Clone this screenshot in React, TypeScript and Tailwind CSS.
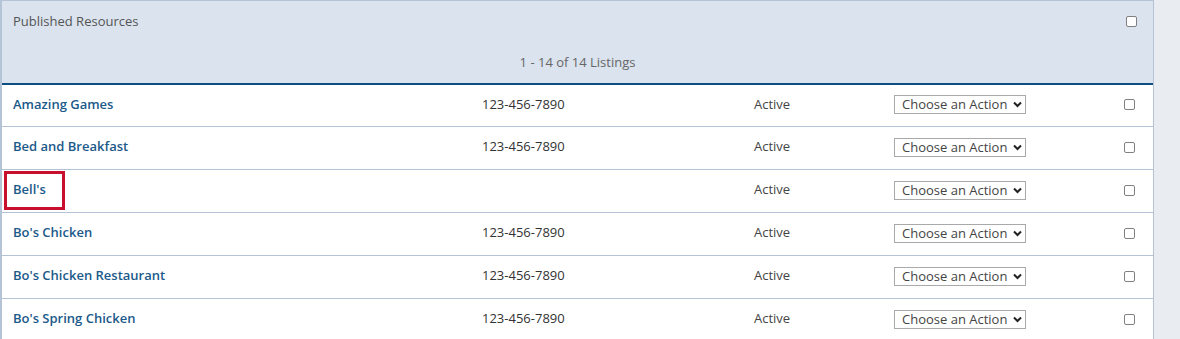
import React from 'react';

const rows = [
  { name: 'Amazing Games', phone: '123-456-7890', status: 'Active' },
  { name: 'Bed and Breakfast', phone: '123-456-7890', status: 'Active' },
  { name: "Bell's", phone: '', status: 'Active', flagged: true },
  { name: "Bo's Chicken", phone: '123-456-7890', status: 'Active' },
  { name: "Bo's Chicken Restaurant", phone: '123-456-7890', status: 'Active' },
  { name: "Bo's Spring Chicken", phone: '123-456-7890', status: 'Active' },
];

const Checkbox = () => (
  <input
    type="checkbox"
    className="appearance-none w-[11px] h-[11px] border border-[#808080] rounded-[2px] bg-white"
  />
);

const ActionSelect = () => (
  <div className="flex items-center justify-between w-[132px] h-[19px] border border-[#a9a9a9] bg-white pl-[7px] pr-[3px] text-[13px] text-[#444] leading-none">
    <span>Choose an Action</span>
    <svg width="9" height="7" viewBox="0 0 9 7" fill="none">
      <path d="M1 1.5 L4.5 5 L8 1.5" stroke="#222" strokeWidth="2" />
    </svg>
  </div>
);

const App = () => {
  return (
    <div
      className="flex w-[1180px] h-[339px] overflow-hidden bg-[#e9edf2]"
      style={{ fontFamily: '"Open Sans", "Liberation Sans", sans-serif' }}
    >
      <div className="w-[1154px] shrink-0 bg-white border-t border-l-2 border-r border-[#b4c3d5]">
        {/* Header */}
        <div className="h-[84px] bg-[#dae3ee] border-b-2 border-[#0e4f82] flex flex-col">
          <div className="flex items-center justify-between h-[41px] pl-[11px] pr-[16px]">
            <span className="text-[13px] text-[#555]">Published Resources</span>
            <Checkbox />
          </div>
          <div className="flex items-center justify-center h-[41px] text-[13px] text-[#666]">
            1 - 14 of 14 Listings
          </div>
        </div>

        {/* Rows */}
        {rows.map((r, i) => (
          <div
            key={r.name}
            className={`flex items-center border-b border-[#b4c3d5] pb-[2px] text-[13px] ${i === 0 ? 'h-[42px]' : 'h-[43px]'}`}
          >
            <div className="w-[480px] pl-[11px] h-full flex items-center">
              {r.flagged ? (
                <span className="flex items-center h-[39px] ml-[-9px] pl-[6px] w-[61px] border-[3px] border-[#c8102e] font-semibold text-[#1c5a8a]">
                  {r.name}
                </span>
              ) : (
                <span className="font-semibold text-[#1c5a8a]">{r.name}</span>
              )}
            </div>
            <div className="w-[272px] text-[#333]">{r.phone}</div>
            <div className="w-[140px] text-[#444]">{r.status}</div>
            <ActionSelect />
            <div className="flex-1 flex justify-end pr-[18px]">
              <Checkbox />
            </div>
          </div>
        ))}
      </div>
    </div>
  );
};

export default App;
